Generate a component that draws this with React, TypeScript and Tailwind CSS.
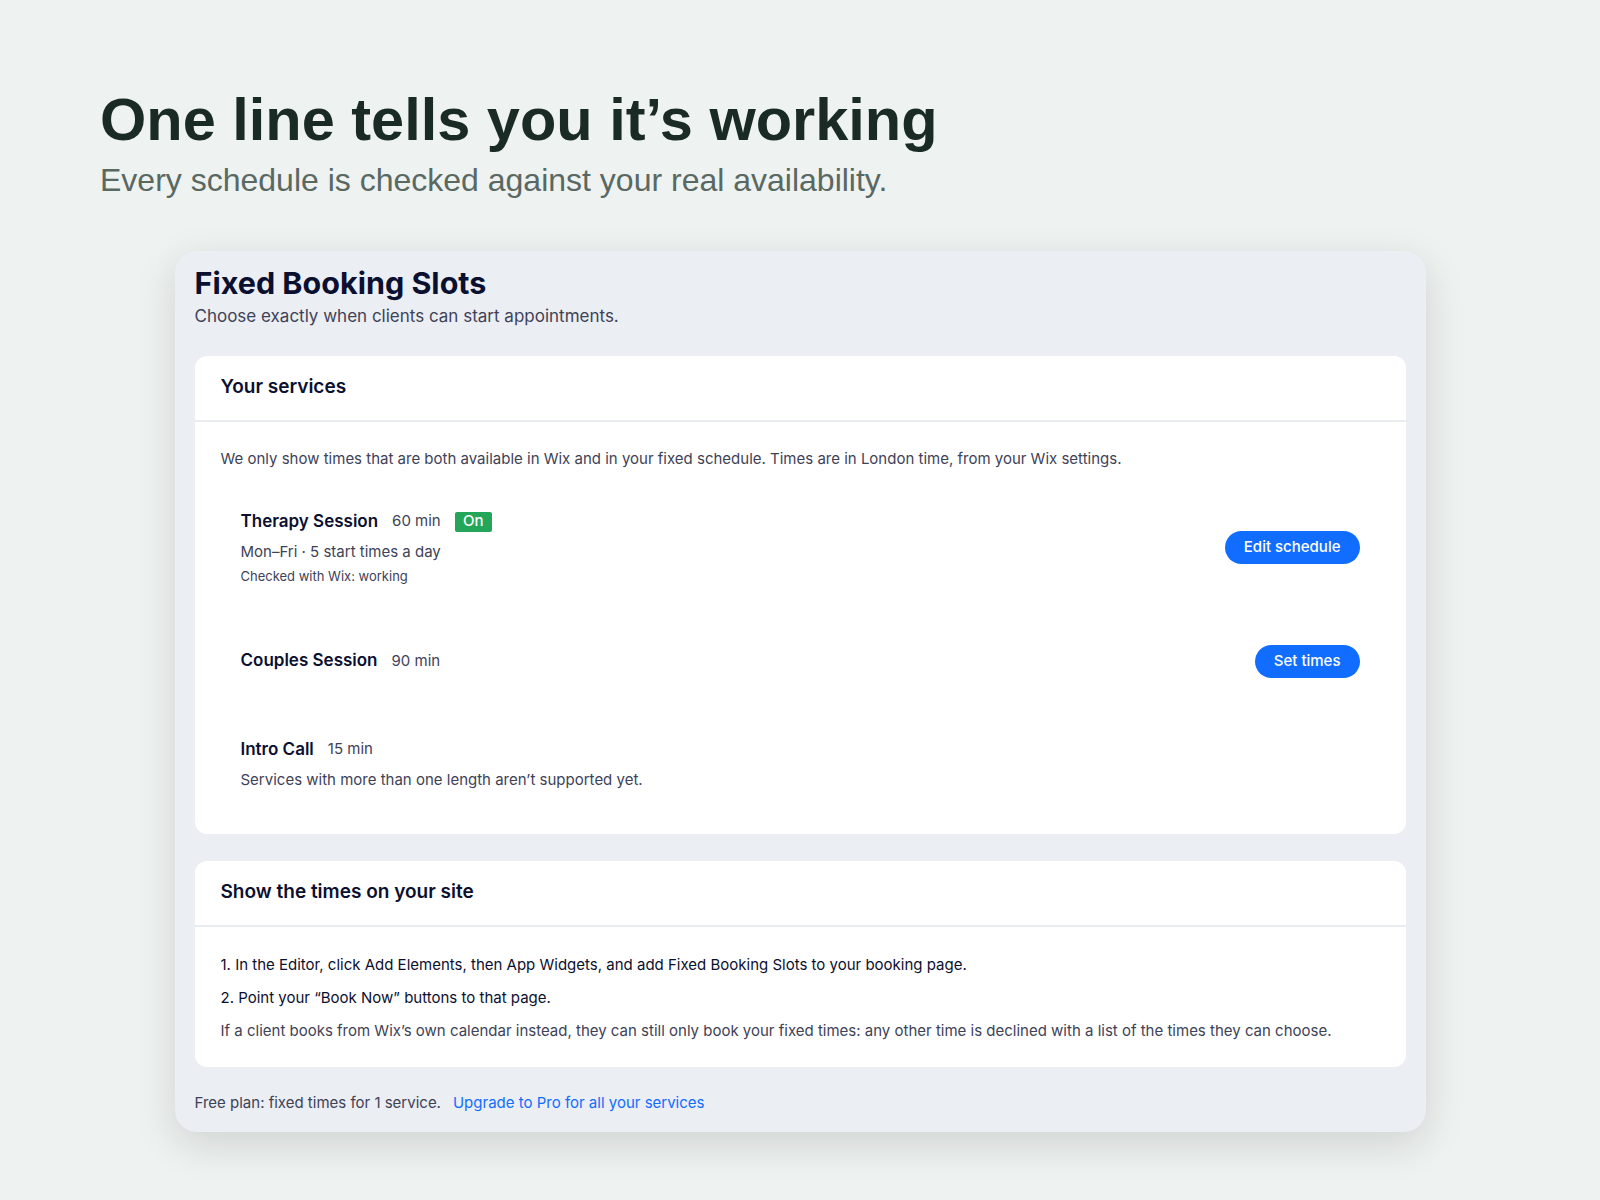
import React from 'react';

const ui = { fontFamily: 'Inter, "Noto Sans", sans-serif' };
const display = { fontFamily: '"Liberation Sans", Arial, sans-serif' };

interface ServiceRowProps {
  name: string;
  length: string;
  on?: boolean;
  lines?: string[];
  note?: string;
  action?: string;
}

function ServiceRow({ name, length, on, lines = [], note, action }: ServiceRowProps) {
  return (
    <div className="flex items-center justify-between px-5 py-5">
      <div className="flex flex-col">
        <div className="flex items-center h-6">
          <span className="text-[17px] font-semibold text-[#0c1030]">{name}</span>
          <span className="ml-[14px] text-[15px] text-[#3e4257]">{length}</span>
          {on && (
            <span className="ml-[14px] flex h-5 w-[37px] items-center justify-center rounded-[2px] bg-[#23a55a] text-[15px] font-medium text-white">
              On
            </span>
          )}
        </div>
        {lines.map((line) => (
          <p key={line} className="mt-[7px] text-[15px] leading-[22px] text-[#3e4257]">
            {line}
          </p>
        ))}
        {note && <p className="mt-[4px] text-[13px] leading-[18px] text-[#3e4257]">{note}</p>}
      </div>
      {action && (
        <button className="h-[33px] rounded-full bg-[#116dff] px-[19px] text-[15px] font-medium text-white">
          {action}
        </button>
      )}
    </div>
  );
}

function Panel({ title, children }: { title: string; children: React.ReactNode }) {
  return (
    <section className="rounded-xl bg-white">
      <div className="flex h-[66px] items-center border-b-2 border-[#e8ebf0] px-[26px]">
        <h2 className="text-[19px] font-semibold text-[#0c1030]">{title}</h2>
      </div>
      {children}
    </section>
  );
}

export default function App() {
  return (
    <div className="min-h-[1200px] w-full bg-[#eef2f1] pb-[70px]">
      <div className="px-[100px] pt-[90px]" style={display}>
        <h1 className="text-[59.5px] font-bold leading-none text-[#1a2a24]">One line tells you it’s working</h1>
        <p className="mt-[14px] text-[32px] leading-none text-[#5a6862]">
          Every schedule is checked against your real availability.
        </p>
      </div>

      <div
        className="mx-auto mt-[55px] w-[1251px] rounded-[22px] bg-[#ebeef3] px-5 pb-[18px] pt-[14px] shadow-[0_12px_40px_rgba(20,30,30,0.14)]"
        style={ui}
      >
        <h1 className="text-[30.5px] font-bold leading-9 text-[#0c1030]">Fixed Booking Slots</h1>
        <p className="mt-[3px] text-[17px] leading-6 text-[#3e4257]">Choose exactly when clients can start appointments.</p>

        <div className="mt-[28px] flex flex-col gap-[27px]">
          <Panel title="Your services">
            <div className="px-[26px] pb-[23px] pt-[26px]">
              <p className="text-[15px] leading-[22px] text-[#3e4257]">
                We only show times that are both available in Wix and in your fixed schedule. Times are in London time, from your Wix settings.
              </p>
              <div className="mt-5 flex flex-col gap-5">
                <ServiceRow
                  name="Therapy Session"
                  length="60 min"
                  on
                  lines={['Mon–Fri · 5 start times a day']}
                  note="Checked with Wix: working"
                  action="Edit schedule"
                />
                <ServiceRow name="Couples Session" length="90 min" action="Set times" />
                <ServiceRow
                  name="Intro Call"
                  length="15 min"
                  lines={['Services with more than one length aren’t supported yet.']}
                />
              </div>
            </div>
          </Panel>

          <Panel title="Show the times on your site">
            <div className="flex flex-col gap-[11px] px-[26px] pb-[25px] pt-[27px] text-[15px] leading-[22px]">
              <p className="text-[#0c1030]">
                1. In the Editor, click Add Elements, then App Widgets, and add Fixed Booking Slots to your booking page.
              </p>
              <p className="text-[#0c1030]">2. Point your “Book Now” buttons to that page.</p>
              <p className="text-[#3e4257]">
                If a client books from Wix’s own calendar instead, they can still only book your fixed times: any other time is declined with a list of the times they can choose.
              </p>
            </div>
          </Panel>
        </div>

        <p className="mt-[25px] text-[15px] leading-[22px] text-[#3e4257]">
          Free plan: fixed times for 1 service.
          <a className="ml-[12px] text-[#116dff]" href="#">
            Upgrade to Pro for all your services
          </a>
        </p>
      </div>
    </div>
  );
}
